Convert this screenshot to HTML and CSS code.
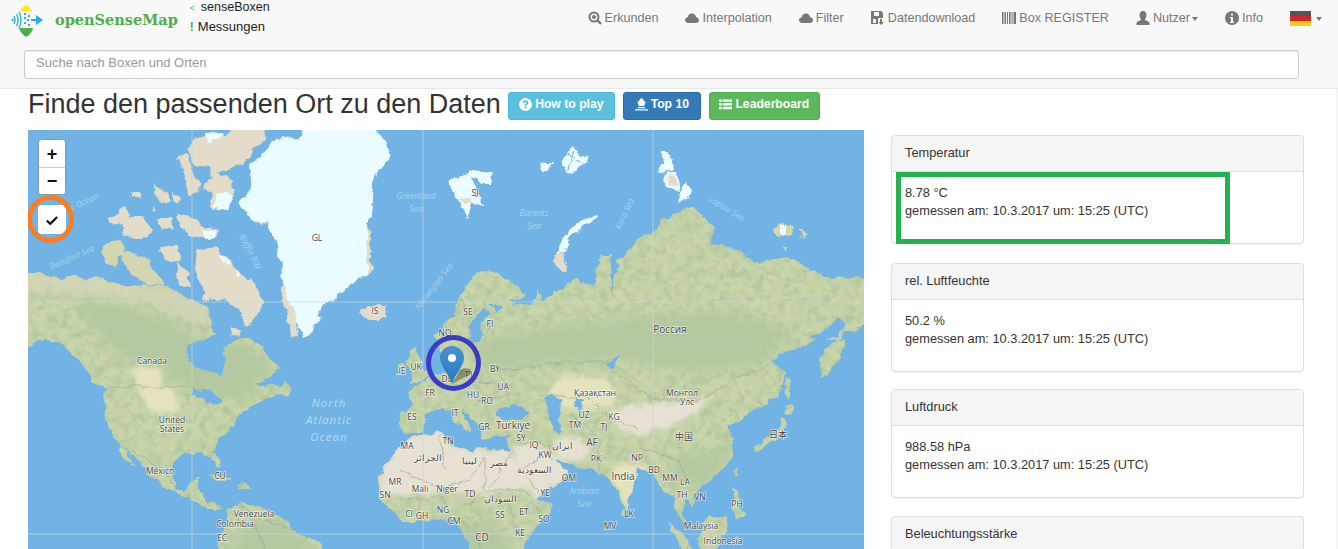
FILE: index.html
```html
<!DOCTYPE html>
<html lang="de">
<head>
<meta charset="utf-8">
<title>openSenseMap</title>
<link rel="stylesheet" href="styles.css">
</head>
<body>
<header class="navbar">
  <div class="nav-top">
    <a class="brand">
      <svg class="logo" viewBox="0 0 34 33" aria-hidden="true">
        <path d="M9 6 C11 2 13 1 15 0 C17 1 20 3 21 6 Z" fill="#ffe81a"/>
        <path d="M8 22 L22 22 C21 27 18 29 15 31 C12 29 9 26 8 22 Z" fill="#4caf47" transform="translate(0 1)"/>
        <g fill="none" stroke="#29aee6" stroke-width="1.3">
          <path d="M3 11 Q5 15 3 19"/><path d="M5.5 9 Q8.5 15 5.500 21"/><path d="M8 7 Q12 15 8 23"/>
        </g>
        <circle cx="1.500" cy="15" r="1.200" fill="#29aee6"/>
        <g fill="#29aee6">
          <rect x="13" y="8" width="2" height="2"/><rect x="17" y="10" width="2" height="2"/><rect x="13" y="12" width="2" height="2"/>
          <rect x="16" y="14" width="2" height="2"/><rect x="13" y="17" width="2" height="2"/><rect x="17" y="19" width="2" height="2"/>
          <path d="M20 14 H25 V10 L32 15 L25 20 V16 H20 Z"/>
        </g>
      </svg>
      <span class="brand-name">openSenseMap</span>
    </a>
    <div class="sublinks">
      <span class="sublink-a"><i>&lt;</i>senseBoxen</span>
      <span class="sublink-b"><i>!</i>Messungen</span>
    </div>
    <nav class="menu">
      <a><svg class="ico" viewBox="0 0 14 14"><circle cx="6" cy="6" r="4.500" fill="none" stroke="#777" stroke-width="2"/><circle cx="6" cy="6" r="2" fill="#777"/><path d="M9 9 L13 13" stroke="#777" stroke-width="2.400"/></svg>Erkunden</a>
      <a><svg class="ico" viewBox="0 0 14 14"><path d="M3.500 12 C1 12 0 10.500 0 9 C0 7.500 1.200 6.500 2.500 6.500 C3 4 4.800 2.500 7 2.500 C9.500 2.500 11 4.500 11 6.300 C12.800 6.500 14 7.800 14 9.300 C14 11 12.800 12 11 12 Z" fill="#777"/></svg>Interpolation</a>
      <a><svg class="ico" viewBox="0 0 14 14"><path d="M3.500 12 C1 12 0 10.500 0 9 C0 7.500 1.200 6.500 2.500 6.500 C3 4 4.800 2.500 7 2.500 C9.500 2.500 11 4.500 11 6.300 C12.800 6.500 14 7.800 14 9.300 C14 11 12.800 12 11 12 Z" fill="#777"/></svg>Filter</a>
      <a><svg class="ico ico-dl" viewBox="0 0 13 14"><path d="M0 0 H10 L12 2 V7 H7 V13 H0 Z M3 1 V5 H8 V1 Z M2 8 V12 H5 V8 Z" fill="#777" fill-rule="evenodd"/><path d="M9 8 H11 V11 H13 L10 14 L7.500 11 H9 Z" fill="#777"/></svg>Datendownload</a>
      <a><svg class="ico" viewBox="0 0 14 14"><path d="M0 1 H1.500 V13 H0 Z M2.500 1 H4 V13 H2.500 Z M5 1 H6 V13 H5 Z M7 1 H8.500 V13 H7 Z M9.500 1 H10.500 V13 H9.500 Z M11.500 1 H14 V13 H11.500 Z" fill="#777"/></svg>Box REGISTER</a>
      <a><svg class="ico" viewBox="0 0 14 14"><path d="M7 0 C9.500 0 10.500 2 10.500 4 C10.500 6 9.500 7.500 8.800 8.500 C9 9.500 13 10 13.500 12 V14 H.5 V12 C1 10 5 9.500 5.200 8.500 C4.500 7.500 3.500 6 3.500 4 C3.500 2 4.500 0 7 0 Z" fill="#777"/></svg>Nutzer<b class="caret"></b></a>
      <a><svg class="ico" viewBox="0 0 14 14"><path d="M7 0 A7 7 0 1 0 7 14 A7 7 0 1 0 7 0 Z M6 2.500 H8 V4.500 H6 Z M5 6 H8 V10.500 H9 V12 H5 V10.500 H6 V7.500 H5 Z" fill="#777" fill-rule="evenodd"/></svg>Info</a>
      <a class="lang"><svg class="flag" viewBox="0 0 21 15"><rect width="21" height="5" fill="#555"/><rect y="5" width="21" height="5" fill="#d9232a"/><rect y="10" width="21" height="5" fill="#f5cf16"/></svg><b class="caret"></b></a>
    </nav>
  </div>
  <div class="search"><input class="search-input" type="text" placeholder="Suche nach Boxen und Orten"></div>
</header>

<main class="page">
  <div class="title-row">
    <h1 class="title">Finde den passenden Ort zu den Daten</h1>
    <a class="btn btn-info"><svg class="btn-ico" viewBox="0 0 13 13"><path d="M6.500 0 A6.500 6.500 0 1 0 6.500 13 A6.500 6.500 0 1 0 6.500 0 Z M6.600 2.300 C8.400 2.300 9.500 3.300 9.500 4.700 C9.500 6.200 7.600 6.400 7.600 7.800 H5.500 C5.500 5.700 7.300 5.500 7.300 4.700 C7.300 4.200 7 3.900 6.500 3.900 C5.900 3.900 5.500 4.300 5.500 5 H3.500 C3.500 3.300 4.800 2.300 6.600 2.300 Z M5.500 8.600 H7.600 V10.600 H5.500 Z" fill="#fff" fill-rule="evenodd"/></svg>How to play</a>
    <a class="btn btn-primary"><svg class="btn-ico" viewBox="0 0 14 13"><path d="M5.500 0 H8.500 V1.500 H9.500 V3 L11.500 3.500 L10 8 H4 L2.500 3.500 L4.500 3 V1.500 H5.500 Z M3 9.300 H11 V10.500 H3 Z M0 11.500 H14 V13 H0 Z" fill="#fff"/></svg>Top 10</a>
    <a class="btn btn-success"><svg class="btn-ico" viewBox="0 0 14 13"><path d="M0 1 H3 V3.500 H0 Z M4 1 H14 V3.500 H4 Z M0 5 H3 V7.500 H0 Z M4 5 H14 V7.500 H4 Z M0 9 H3 V11.500 H0 Z M4 9 H14 V11.500 H4 Z" fill="#fff"/></svg>Leaderboard</a>
  </div>
  <div class="content">
    <section class="map">
      <svg class="map-svg" viewBox="28 130 836 419" aria-label="Karte">
        <defs>
          <linearGradient id="pinGrad" x1="0" y1="0" x2="0" y2="1"><stop offset="0" stop-color="#4a94cf"/><stop offset="1" stop-color="#2178c4"/></linearGradient>
          <filter id="coast" filterUnits="userSpaceOnUse" x="18" y="120" width="856" height="440" color-interpolation-filters="sRGB">
            <feTurbulence type="fractalNoise" baseFrequency="0.085" numOctaves="4" seed="11" result="n"/>
            <feDisplacementMap in="SourceGraphic" in2="n" scale="9" xChannelSelector="R" yChannelSelector="G"/>
            <feGaussianBlur stdDeviation=".4"/>
          </filter>
          <filter id="terrain" x="0" y="0" width="100%" height="100%" color-interpolation-filters="sRGB">
            <feTurbulence type="fractalNoise" baseFrequency="0.13" numOctaves="3" seed="7"/>
            <feColorMatrix values="0 0 0 0 .66  0 0 0 0 .76  0 0 0 0 .60  1.800 0 0 0 -.72"/>
            <feComposite in2="SourceAlpha" operator="in"/>
          </filter>
          <g id="land">
            <path d="M20 273 L60 277 L97 277 L112 283 L130 287 L145 284 L160 287 L175 290 L187 296 L197 301 L207 307 L209 318 L210 326 L216 334 L205 338 L190 345 L186 352 L190 362 L198 370 L212 372 L220 377 L226 360 L222 348 L232 342 L240 338 L252 340 L262 348 L272 360 L280 370 L268 378 L256 386 L272 384 L284 392 L270 397 L262 402 L252 406 L244 412 L236 422 L228 430 L220 440 L214 448 L216 456 L222 468 L216 466 L210 456 L200 452 L186 454 L178 458 L172 470 L176 490 L186 490 L192 482 L198 478 L199 490 L204 500 L214 505 L224 511 L216 512 L206 506 L190 500 L176 491 L160 486 L150 475 L136 458 L128 452 L124 447 L133 466 L126 460 L118 444 L112 434 L106 420 L104 402 L106 388 L94 382 L88 372 L82 364 L70 352 L63 346 L50 339 L38 340 L30 346 L20 350 Z"/>
            <path d="M227 510 L240 503 L252 504 L273 513 L283 519 L293 530 L312 538 L323 545 L335 558 L218 558 L222 535 L226 524 Z"/>
            <path d="M207 475 L218 474 L232 480 L226 481 L214 478 Z M238 484 L247 483 L252 487 L242 487 Z"/>
            <path d="M287 378 L292 388 L288 395 L274 391 L283 386 Z"/>
            <path d="M380 477 L388 462 L400 447 L412 437 L425 434 L440 433 L450 439 L455 448 L470 451 L487 447 L507 453 L513 462 L520 473 L528 487 L535 500 L553 505 L546 516 L535 530 L527 540 L521 558 L470 558 L466 533 L455 522 L440 518 L425 522 L403 522 L392 512 L380 497 Z"/>
            <path d="M453 317 L458 302 L463 290 L473 278 L483 270 L492 271 L500 277 L514 283 L527 293 L520 300 L510 302 L523 307 L534 302 L537 290 L543 302 L552 295 L560 290 L570 282 L577 277 L586 284 L593 287 L597 272 L600 255 L610 255 L612 280 L612 297 L617 263 L630 250 L636 240 L643 237 L660 224 L680 210 L693 207 L702 214 L713 227 L710 243 L728 247 L740 250 L753 263 L770 260 L787 257 L800 262 L810 270 L825 275 L833 280 L850 278 L872 280 L872 322 L852 332 L845 332 L838 340 L817 340 L800 346 L785 352 L770 363 L778 366 L786 372 L784 384 L780 397 L770 398 L760 407 L745 414 L740 420 L727 427 L733 440 L733 457 L725 468 L713 477 L700 487 L695 495 L693 507 L686 500 L682 510 L686 524 L680 520 L673 497 L664 490 L653 477 L645 470 L637 467 L632 490 L627 510 L620 500 L610 480 L600 473 L588 468 L577 467 L567 463 L553 460 L570 473 L560 482 L550 490 L535 500 L527 488 L517 477 L511 462 L507 453 L510 437 L498 436 L488 438 L480 437 L482 430 L476 424 L472 418 L462 410 L472 431 L464 432 L452 414 L442 408 L433 410 L430 412 L418 433 L404 432 L399 424 L400 412 L412 406 L408 394 L420 384 L434 374 L448 372 L447 360 L440 346 L434 336 Z"/>
            <path d="M838 340 L846 338 L840 356 L830 372 L821 378 L820 362 L826 348 Z"/>
            <path d="M407 358 L411 348 L417 346 L418 356 L424 368 L428 376 L420 382 L410 383 L414 372 L408 366 Z M397 364 L405 363 L406 372 L397 376 Z"/>
            <path d="M755 447 L765 440 L772 436 L780 428 L783 417 L787 420 L785 434 L770 444 L758 450 Z M784 407 L792 404 L794 412 L786 414 Z M786 378 L790 382 L790 396 L787 400 Z"/>
            <path d="M667 520 L680 530 L692 546 L698 558 L688 558 L672 532 Z M705 520 L725 516 L728 530 L718 546 L704 558 L698 540 Z M733 487 L738 490 L737 500 L742 512 L746 516 L738 518 L733 508 Z M733 470 L736 467 L737 475 L734 478 Z M622 508 L625 509 L626 514 L623 516 Z"/>
          </g>
          <mask id="landmask" maskUnits="userSpaceOnUse" x="18" y="120" width="856" height="440">
            <use href="#land" class="mask-fill"/>
          </mask>
        </defs>
        <rect class="water" x="28" y="130" width="836" height="419"/>
        <g filter="url(#coast)">
          <use href="#land" class="land"/>
          <use href="#land" filter="url(#terrain)"/>
          <g mask="url(#landmask)">
            <g class="blur-wide">
              <path class="forest" d="M70 300 L120 305 L170 322 L200 340 L240 345 L272 362 L250 395 L226 400 L195 392 L160 368 L130 362 L105 340 Z"/>
              <path class="forest" d="M470 345 L540 330 L620 320 L720 312 L790 330 L760 362 L700 372 L620 358 L540 362 L490 372 Z"/>
              <path class="forest" d="M245 520 L285 522 L320 558 L230 558 Z M440 522 L500 525 L510 558 L470 558 Z"/>
              <path class="forest" d="M675 455 L710 455 L725 440 L732 445 L720 470 L695 488 L672 480 Z"/>
              <path class="tundra-soft" d="M20 273 L100 277 L160 287 L207 307 L210 326 L150 300 L60 292 L20 290 Z"/>
            </g>
            <g class="blur-mid">
              <path class="sand" d="M380 470 L400 440 L440 430 L455 448 L507 450 L522 473 L530 490 L505 490 L485 494 L450 492 L420 494 L385 496 Z"/>
              <path class="sand" d="M511 448 L530 442 L550 452 L566 462 L570 473 L550 490 L535 500 L520 473 Z"/>
              <path class="sand" d="M610 412 L640 405 L670 402 L710 398 L700 412 L672 425 L640 436 L618 430 Z"/>
              <path class="sand" d="M552 440 L580 436 L590 452 L580 462 L560 458 Z"/>
              <path class="prairie" d="M130 366 L160 368 L162 386 L176 390 L178 412 L150 412 L138 390 Z"/>
              <path class="prairie" d="M560 374 L610 380 L615 405 L570 412 L545 398 Z"/>
              <path class="prairie" d="M615 462 L650 466 L640 490 L628 508 L612 482 Z"/>
            </g>
          </g>
          <!-- arctic islands -->
          <g class="tundra">
            <path d="M188 150 L193 142 L207 135 L223 133 L240 122 L267 122 L265 138 L253 150 L250 158 L233 167 L217 170 L233 183 L232 193 L220 195 L217 210 L212 208 L210 190 L202 190 L212 180 L210 168 L200 167 L192 160 Z"/>
            <path d="M177 160 L187 153 L197 180 L200 190 L190 197 L183 177 Z"/>
            <path d="M177 213 L193 220 L210 227 L220 232 L217 238 L200 238 L190 237 L183 227 L175 218 Z"/>
            <path d="M153 183 L163 190 L170 202 L163 203 L157 193 Z M172 192 L180 198 L178 203 L173 200 Z M133 193 L142 193 L140 198 L133 198 Z M152 205 L157 212 L153 213 Z"/>
            <path d="M110 220 L127 207 L128 218 L140 217 L153 230 L147 237 L135 240 L123 233 L123 223 L110 225 Z"/>
            <path d="M157 218 L170 218 L173 230 L160 227 Z M160 247 L177 245 L183 260 L170 265 L163 257 Z M177 263 L187 270 L190 287 L180 287 Z"/>
            <path d="M195 250 L217 247 L227 257 L237 270 L250 280 L265 303 L253 320 L247 327 L237 310 L223 300 L210 297 L202 287 L193 270 Z"/>
            <path d="M203 280 L206 280 L213 297 L203 300 Z M232 327 L240 330 L238 337 L230 335 Z"/>
            <path d="M360 312 L368 306 L385 305 L388 312 L385 318 L372 320 L362 317 Z"/>
            <path d="M280 287 L290 283 L296 300 L298 335 L292 338 L286 312 Z M362 230 L369 225 L372 270 L360 280 Z"/>
            <path d="M256 185 L243 205 L255 222 L268 225 L256 210 Z"/>
          </g>
          <g class="tundra-green">
            <path d="M120 253 L127 252 L140 257 L148 258 L153 270 L163 280 L163 287 L143 283 L130 273 Z"/>
            <path d="M105 242 L123 240 L125 250 L118 257 L115 267 L105 262 L102 250 Z"/>
          </g>
          <!-- ice -->
          <path class="ice" d="M260 157 L273 140 L300 138 L303 122 L370 122 L390 147 L387 160 L373 180 L373 203 L367 230 L367 273 L340 293 L327 303 L310 333 L303 337 L293 310 L283 280 L277 240 L267 223 L253 220 L240 203 L253 190 L250 167 Z"/>
          <path class="ice" d="M215 192 L232 194 L228 209 L216 207 Z M205 133 L222 132 L218 140 L206 142 Z M204 228 L218 231 L215 238 L206 237 Z M222 254 L227 258 L228 264 L222 262 Z M236 270 L242 276 L238 278 Z"/>
          <path class="ice" d="M450 180 L465 175 L470 170 L493 172 L490 183 L482 183 L472 178 L475 188 L485 208 L473 203 L467 218 L458 200 L453 197 Z"/>
          <path class="tundra-fill" d="M460 198 L471 197 L474 204 L464 206 Z"/>
          <path class="ice" d="M540 163 L553 162 L550 170 L543 172 Z M562 160 L570 150 L573 145 L580 157 L588 155 L588 162 L580 167 L573 173 L567 172 L562 165 Z"/>
          <path class="water-line" d="M565 155 L582 165 M573 150 L568 170"/>
          <path class="ice" d="M597 215 L598 218 L580 228 L570 237 L563 253 L557 255 L563 240 L573 225 Z"/>
          <path class="tundra-fill" d="M563 253 L568 273 L562 272 L555 262 L557 255 Z"/>
          <path class="ice" d="M663 153 L668 153 L672 160 L673 170 L660 173 L657 172 L662 165 Z M665 173 L677 173 L680 192 L670 188 L663 180 Z M685 182 L693 193 L687 198 L678 202 Z"/>
          <path class="tundra-fill" d="M668 175 L675 176 L677 186 L670 184 Z"/>
          <path class="tundra-green" d="M773 227 L783 223 L793 228 L792 235 L780 238 L774 233 Z M798 230 L808 235 L802 237 Z M782 245 L788 248 L786 251 Z"/>
          <path class="ice" d="M782 225 L786 225 L786 236 L782 236 Z"/>
          <!-- inner water -->
          <path class="water" d="M468 330 L476 318 L484 308 L488 310 L482 322 L480 340 L470 345 Z"/>
          <path class="water" d="M490 304 L502 304 L495 311 Z"/>
          <path class="water" d="M496 410 L512 405 L530 412 L522 418 L506 421 L496 418 Z"/>
          <path class="water" d="M543 398 L550 394 L562 400 L558 420 L560 432 L552 430 L550 415 Z"/>
          <path class="water" d="M190 355 L214 358 L220 366 L222 376 L210 372 L198 370 L190 362 Z"/>
          <path class="water" d="M193 385 L200 393 L208 390 L222 400 L218 404 L203 400 L193 395 Z"/>
          <path class="water" d="M576 398 L583 402 L582 412 L575 408 Z M606 365 L622 355 L614 370 Z"/>
          <path class="water" d="M808 338 L826 330 L838 320 L846 322 L838 335 L820 342 Z"/>
          <!-- borders -->
          <path class="border" d="M108 387 L195 387 L202 392 M121 447 L142 456 L165 470 L176 490"/>
          <path class="border" d="M220 510 L255 525 L265 549 M240 503 L250 515 L292 530"/>
          <path class="border" d="M440 340 L462 300 L472 318 L465 345 M484 300 L490 320 L484 345"/>
          <path class="border" d="M490 372 L560 362 L600 362 L640 390 L660 400 L700 400 L735 378 L770 365 M540 395 L590 398 L610 418 L640 430 M570 415 L590 430 L600 445 L600 470 M640 450 L680 460 L685 480 M478 400 L510 395 L500 375 M450 385 L490 380 M520 440 L550 445 L552 460 M547 500 L520 470 L540 455"/>
          <path class="border" d="M400 470 L440 488 L470 480 L485 455 M440 433 L445 470 M485 455 L485 490 L525 490 L540 510 M510 453 L490 490 M395 500 L440 498 L470 530 M420 497 L420 518 M510 510 L520 540 M470 500 L480 549"/>
        </g>
        <!-- graticule -->
        <path class="grid" d="M192 130 V549 M423 130 V549 M653 130 V549 M28 302 H864 M28 534 H864"/>
        <g class="sea">
          <text x="78" y="208" transform="rotate(-25 78 208)">Arctic Ocean</text>
          <text x="73" y="260" transform="rotate(-24 73 260)">Beaufort Sea</text>
          <text x="248" y="253" transform="rotate(62 248 253)">Baffin Bay</text>
          <text x="416" y="199">Greenland</text><text x="416" y="212">Sea</text>
          <text x="534" y="216">Barents</text><text x="534" y="229">Sea</text>
          <text x="627" y="215" transform="rotate(-65 627 215)">Kara Sea</text>
          <text x="725" y="211" transform="rotate(32 725 211)">Laptev Sea</text>
          <text x="436" y="288" transform="rotate(-52 436 288)">Norwegian Sea</text>
          <text x="584" y="494">Arabian</text><text x="584" y="507">Sea</text>
          <g class="sea-big"><text x="329" y="407">North</text><text x="329" y="424">Atlantic</text><text x="329" y="441">Ocean</text></g>
        </g>
        <g class="lbl">
          <text x="317" y="241">GL</text><text x="375" y="314">IS</text><text x="475" y="196">SJ</text><text x="468" y="315">SE</text><text x="490" y="327">FI</text><text x="445" y="336">NO</text>
          <text class="big" x="670" y="333">Россия</text><text x="152" y="364">Canada</text><text x="172" y="423">United</text><text x="172" y="432">States</text><text x="160" y="474">México</text><text x="220" y="479">CU</text>
          <text x="254" y="517">Venezuela</text><text x="235" y="527">Colombia</text><text x="222" y="541">EC</text><text x="402" y="374">IE</text><text x="416" y="370">UK</text><text x="430" y="396">FR</text><text x="412" y="420">ES</text><text x="407" y="449">MA</text>
          <text x="395" y="485">MR</text><text x="420" y="492">Mali</text><text x="385" y="498">SN</text><text x="409" y="517">CI</text><text x="422" y="519">GH</text><text x="428" y="461">الجزائر</text>
          <text x="495" y="372">BY</text><text x="503" y="390">UA</text><text x="473" y="398">HU</text><text x="487" y="404">RO</text><text x="455" y="416">IT</text><text x="484" y="430">GR</text><text class="big" x="513" y="429">Türkiye</text><text x="448" y="444">TN</text>
          <text x="595" y="396">Қазақстан</text><text x="682" y="396">Монгол</text><text x="687" y="405">Улс</text><text x="584" y="418">UZ</text><text x="614" y="420">KG</text><text x="575" y="428">TM</text><text x="604" y="430">TJ</text>
          <text class="big" x="592" y="446">AF</text><text x="521" y="441">SY</text><text x="534" y="448">IQ</text><text x="545" y="458">KW</text><text x="562" y="449">ايران</text><text x="596" y="462">PK</text><text x="637" y="461">NP</text><text x="654" y="473">BD</text>
          <text class="cjk" x="684" y="440">中国</text><text class="cjk" x="778" y="438">日本</text><text x="469" y="464">ليبيا</text><text x="499" y="466">مصر</text><text x="534" y="473">السعودية</text><text x="569" y="481">OM</text><text x="545" y="496">YE</text>
          <text class="big" x="623" y="480">India</text><text x="670" y="481">MM</text><text x="685" y="485">LA</text><text x="682" y="498">TH</text><text x="700" y="500">VN</text><text x="737" y="507">PH</text><text x="701" y="529">Malaysia</text><text x="723" y="544">Indonesia</text>
          <text x="629" y="517">LK</text><text x="610" y="529">MV</text><text x="447" y="492">Niger</text><text x="470" y="497">TD</text><text x="500" y="502">السودان</text><text x="524" y="515">ET</text><text x="500" y="518">SS</text><text x="544" y="522">SO</text>
          <text x="520" y="536">KE</text><text class="big" x="482" y="541">CD</text><text x="454" y="524">CM</text><text x="443" y="513">NG</text><text x="447" y="382">DE</text><text x="470" y="378">PL</text>
        </g>
        <path class="pin-shadow" d="M452 384 L470 374 C474 370 466 366 460 370 Z"/>
        <path d="M452 384 C449 374 440 366 440 358 C440 351 445 346 452 346 C459 346 464 351 464 358 C464 366 455 374 452 384 Z" fill="url(#pinGrad)"/>
        <circle class="pin-dot" cx="452" cy="358" r="4"/>
      </svg>
      <div class="zoom">
        <a class="zoom-btn">+</a>
        <a class="zoom-btn">−</a>
      </div>
      <a class="check"><svg viewBox="0 0 14 11"><path d="M1 6 L5 10 L13 2" fill="none" stroke="#111" stroke-width="2.600"/></svg></a>
      <span class="ring-orange"></span>
      <span class="ring-blue"></span>
    </section>
    <aside class="side">
      <article class="panel panel-first">
        <h2 class="panel-head">Temperatur</h2>
        <div class="panel-body">8.78 °C<br>gemessen am: 10.3.2017 um: 15:25 (UTC)</div>
        <span class="box-green"></span>
      </article>
      <article class="panel panel-second">
        <h2 class="panel-head">rel. Luftfeuchte</h2>
        <div class="panel-body">50.2 %<br>gemessen am: 10.3.2017 um: 15:25 (UTC)</div>
      </article>
      <article class="panel">
        <h2 class="panel-head">Luftdruck</h2>
        <div class="panel-body">988.58 hPa<br>gemessen am: 10.3.2017 um: 15:25 (UTC)</div>
      </article>
      <article class="panel panel-last">
        <h2 class="panel-head">Beleuchtungsstärke</h2>
      </article>
    </aside>
  </div>
</main>
</body>
</html>
```
FILE: styles.css
```css
* { box-sizing: border-box; }
html, body { margin: 0; height: 549px; overflow: hidden; background: #fff; }
body { font-family: "Liberation Sans", Arial, sans-serif; font-size: 12.800px; line-height: 18px; color: #333; }

.navbar { height: 89px; background: #f8f8f8; border-bottom: 1px solid #e7e7e7; }
.nav-top { display: flex; align-items: flex-start; height: 50px; padding-left: 11px; }
.brand { display: flex; align-items: center; margin-top: 5px; }
.logo { width: 34px; height: 33px; display: block; }
.brand-name { margin-left: 10px; font-family: "DejaVu Serif", serif; font-weight: 700; font-size: 14.500px; line-height: 20px; color: #4eae4a; margin-top: -3px; }
.sublinks { display: flex; flex-direction: column; margin-left: 12px; margin-top: -2px; color: #222; }
.sublink-a { font-size: 12.500px; line-height: 18px; }
.sublink-a i { display: inline-block; width: 11px; color: #5cb85c; font-style: normal; font-size: 9px; }
.sublink-b { font-size: 13px; line-height: 18px; margin-top: 1px; }
.sublink-b i { display: inline-block; width: 8px; color: #4eae4a; font-style: normal; font-weight: 700; font-size: 12px; }

.menu { display: flex; gap: 27px; margin-left: auto; margin-right: 16px; margin-top: 9px; font-size: 12.600px; color: #777; }
.menu a { display: flex; align-items: center; height: 18px; }
.ico { width: 14px; height: 14px; margin-right: 3px; display: block; }
.ico-dl { width: 13px; margin-right: 4px; }
.caret { display: inline-block; width: 0; height: 0; margin-left: 2px; margin-top: 2px; border-top: 4px solid #777; border-left: 3px solid transparent; border-right: 3px solid transparent; }
.lang .caret { margin-left: 5px; }
.flag { width: 21px; height: 15px; display: block; }

.search { padding: 0 39px 0 24px; }
.search-input { display: block; width: 100%; height: 29px; padding: 0 11px 4px; border: 1px solid #ccc; border-radius: 3px; background: #fff; font: 13px/18px "Liberation Sans", Arial, sans-serif; color: #555; box-shadow: inset 0 1px 1px rgba(0,0,0,.075); }
.search-input::placeholder { color: #999; opacity: 1; }

.page { border-right: 2px solid #f4f4f4; height: 460px; }
.title-row { display: flex; align-items: flex-start; height: 41px; padding: 3px 0 0 28px; }
.title { margin: 0 7px 0 0; font-weight: 400; font-size: 27px; line-height: 25px; color: #333; }
.btn { display: flex; align-items: center; justify-content: center; height: 28px; padding-bottom: 4px; border: 1px solid transparent; border-radius: 3px; color: #fff; font-weight: 700; font-size: 12.200px; margin-right: 8px; }
.btn-ico { width: 13px; height: 13px; margin-right: 3px; display: block; }
.btn-info { width: 107px; background: #5bc0de; border-color: #46b8da; }
.btn-primary { width: 78px; background: #337ab7; border-color: #2e6da4; }
.btn-success { width: 111px; background: #5cb85c; border-color: #4cae4c; }

.content { display: flex; align-items: flex-start; height: 419px; overflow: hidden; padding-left: 28px; }
.map { position: relative; width: 836px; height: 419px; overflow: hidden; background: #71b3e5; }
.map-svg { display: block; width: 836px; height: 419px; }
.water { fill: #71b3e5; }
.mask-fill { fill: #fff; }
.blur-wide { filter: blur(6px); }
.blur-mid { filter: blur(2.500px); }
.land { fill: #c9d4a9; }
.sand { fill: #e6e1d3; }
.prairie { fill: #e4e3bd; }
.forest { fill: #b3c8a0; }
.tundra-soft { fill: #d5d6b6; }
.tundra, .tundra-fill { fill: #e2dcc8; }
.tundra-green { fill: #d4d6b0; }
.ice { fill: #eafcff; }
.water-line { fill: none; stroke: #71b3e5; stroke-width: 1; }
.border { fill: none; stroke: #9ea7a2; stroke-width: .7; }
.grid { fill: none; stroke: #c9d4d9; stroke-width: 1; opacity: .7; }
.sea text { font: italic 8.500px "Open Sans", sans-serif; fill: #a8d2ef; text-anchor: middle; }
.sea-big text { font-size: 11.500px; letter-spacing: 1px; fill: #b6daf1; }
.lbl text { font: 8.500px "Open Sans", "Noto Sans", sans-serif; fill: #444; text-anchor: middle; paint-order: stroke; stroke: rgba(255,255,255,.7); stroke-width: 1.500px; stroke-linejoin: round; }
.lbl text.big { font-size: 10px; }
.lbl text.cjk { font-family: "Noto Sans CJK SC", sans-serif; font-size: 9px; }
.pin-shadow { fill: rgba(50,40,20,.4); }
.pin-dot { fill: #fff; }

.zoom { position: absolute; left: 10px; top: 9px; width: 28px; border: 1px solid #7f9db0; border-radius: 4px; background: #fff; overflow: hidden; }
.zoom-btn { display: flex; align-items: center; justify-content: center; height: 27px; font: 700 18px/1 "Liberation Sans", sans-serif; color: #111; background: #fff; }
.zoom-btn + .zoom-btn { border-top: 1px solid #ccc; }
.check { position: absolute; left: 10px; top: 75px; width: 28px; height: 29px; display: flex; align-items: center; justify-content: center; background: #fff; border-radius: 4px; }
.check svg { width: 12px; height: 10px; display: block; }
.ring-orange { position: absolute; left: -1px; top: 65px; width: 47px; height: 48px; border: 5px solid #fb7d23; border-radius: 50%; }
.ring-blue { position: absolute; left: 398px; top: 205px; width: 55px; height: 56px; border: 5px solid #3b3cc4; border-radius: 50%; }

.side { width: 413px; margin-left: 27px; margin-top: 5px; display: flex; flex-direction: column; gap: 18px; }
.panel { position: relative; height: 109px; border: 1px solid #ddd; border-radius: 4px; background: #fff; box-shadow: 0 1px 1px rgba(0,0,0,.05); flex: none; }
.panel-first { margin-bottom: 1px; }
.panel-second { margin-bottom: -1px; }
.panel-last { height: 32px; border-bottom: 0; border-radius: 4px 4px 0 0; }
.panel-head { margin: 0; height: 36px; padding: 8px 13px; font-weight: 400; font-size: 12.800px; line-height: 18px; color: #333; background: #f5f5f5; border-bottom: 1px solid #ddd; border-radius: 3px 3px 0 0; }
.panel-last .panel-head { border-bottom: 0; }
.panel-body { padding: 12px 13px; }
.box-green { position: absolute; left: 4px; top: 36px; width: 334px; height: 72px; border: 5px solid #22b14c; }
```
